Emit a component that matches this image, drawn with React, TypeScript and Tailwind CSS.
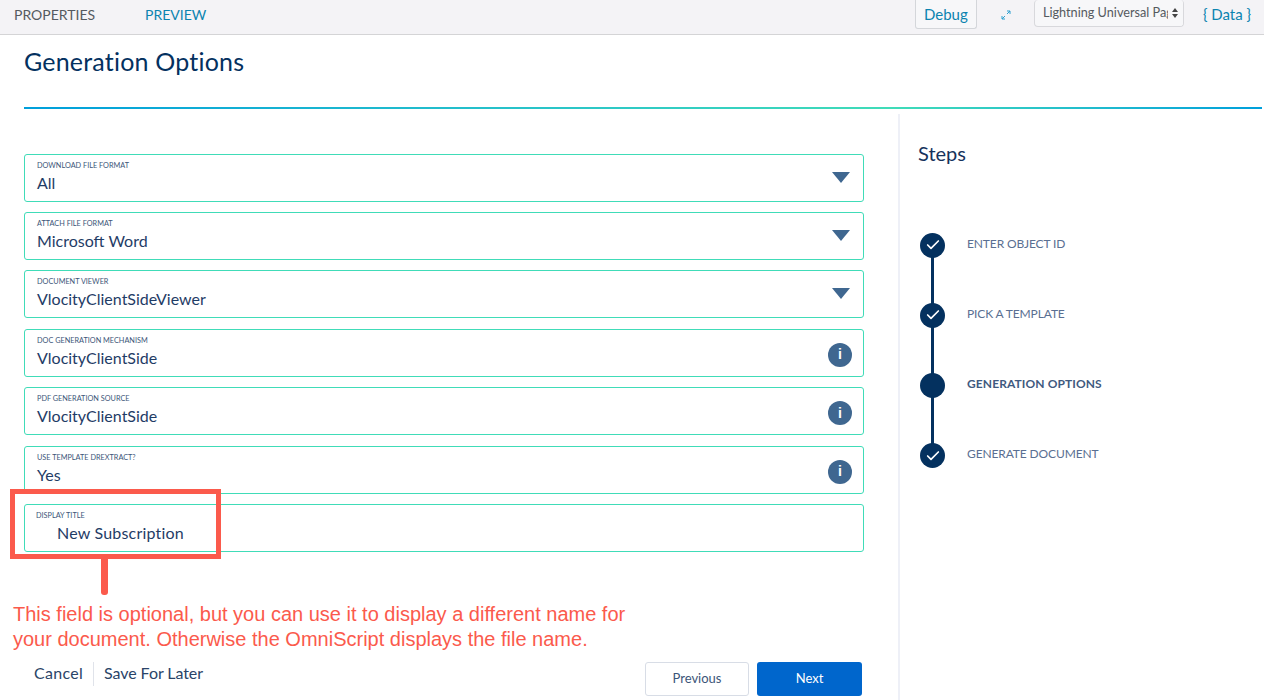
import { Check } from 'lucide-react'

const sans = "font-['Lato','Noto_Sans',sans-serif]"

function CaretField({ label, value }: { label: string; value: string }) {
  return (
    <div className="relative h-[48px] rounded-[3px] border border-[#40dcb8] bg-white pl-[12px]">
      <div className="pt-[5px] text-[7.3px] leading-[11px] uppercase text-[#3c5578]">{label}</div>
      <div className="text-[16px] leading-[24px] text-[#1f3c66]">{value}</div>
      <div className="absolute right-[13px] top-[17px] h-0 w-0 border-x-[9px] border-t-[11px] border-x-transparent border-t-[#3f6790]" />
    </div>
  )
}

function InfoField({ label, value }: { label: string; value: string }) {
  return (
    <div className="relative h-[48px] rounded-[3px] border border-[#40dcb8] bg-white pl-[12px]">
      <div className="pt-[5px] text-[7.3px] leading-[11px] uppercase text-[#3c5578]">{label}</div>
      <div className="text-[16px] leading-[24px] text-[#1f3c66]">{value}</div>
      <div className="absolute right-[11px] top-[13px] flex h-[24px] w-[24px] items-center justify-center rounded-full bg-[#3f6790] font-['Liberation_Sans',sans-serif] text-[14px] font-bold text-white">
        i
      </div>
    </div>
  )
}

function Step({ label, active }: { label: string; active?: boolean }) {
  return (
    <div className="relative flex h-[25px] items-center">
      <div className="flex h-[25px] w-[25px] shrink-0 items-center justify-center rounded-full bg-[#04315f]">
        {!active && <Check className="h-[16px] w-[16px] text-white" strokeWidth={2.5} />}
      </div>
      <div className={`ml-[22px] pb-[3px] text-[12px] uppercase ${active ? 'font-bold tracking-[0.1px] text-[#3f5a80]' : 'tracking-[-0.12px] text-[#5a6f92]'}`}>
        {label}
      </div>
    </div>
  )
}

export default function App() {
  return (
    <div className={`${sans} h-[700px] w-[1264px] overflow-hidden bg-white`}>
      <header className="flex h-[35px] items-start border-b border-[#d4d4d6] bg-[#f4f3f6] pl-[14px] text-[14px]">
        <span className="pt-[4px] text-[#555a60]">PROPERTIES</span>
        <span className="ml-[50px] pt-[4px] text-[#0b84b0]">PREVIEW</span>
        <button className="ml-auto h-[29px] w-[62px] rounded-b-[3px] border border-t-0 border-[#d4d6da] bg-[#f7f7f9] text-[15px] text-[#0b84b0]">Debug</button>
        <svg className="ml-[24px] mt-[10px] h-[10px] w-[10px] text-[#2f9fcf]" viewBox="0 0 10 10" fill="none" stroke="currentColor" strokeWidth="1">
          <path d="M1 9 4 6M6 4l3-3M6 1h3v3M1 6v3h3" />
        </svg>
        <div className="relative ml-[23px] flex h-[27px] w-[150px] items-center overflow-hidden rounded-[4px] border border-t-0 border-[#d8d8dc] bg-[#f7f7f9] pl-[8px] text-[12.7px] whitespace-nowrap text-[#555a60]">
          Lightning Universal Page
          <span className="absolute right-0 top-0 flex h-full w-[15px] flex-col items-center justify-center gap-[2px] bg-[#f7f7f9]">
            <span className="h-0 w-0 border-x-[3px] border-b-[4px] border-x-transparent border-b-[#444]" />
            <span className="h-0 w-0 border-x-[3px] border-t-[4px] border-x-transparent border-t-[#444]" />
          </span>
        </div>
        <span className="ml-[19px] mr-[13px] pt-[3px] text-[15px] text-[#0b84b0]">{'{ Data }'}</span>
      </header>

      <div className="pl-[24px]">
        <h1 className="pt-[10px] pb-[1px] text-[25px] leading-[32px] tracking-[0.2px] text-[#04315f]">Generation Options</h1>
      </div>
      <div className="ml-[24px] mr-[2px] mt-[29px] h-[2px] bg-gradient-to-r from-[#009fdb] via-[#40dcb8] via-70% to-[#009fdb]" />

      <div className="flex">
        <main className="w-[898px] shrink-0">
          <div className="flex flex-col gap-[10.4px] pl-[24px] pr-[34px] pt-[44.6px]">
            <CaretField label="Download File Format" value="All" />
            <CaretField label="Attach File Format" value="Microsoft Word" />
            <CaretField label="Document Viewer" value="VlocityClientSideViewer" />
            <InfoField label="Doc Generation Mechanism" value="VlocityClientSide" />
            <InfoField label="PDF Generation Source" value="VlocityClientSide" />
            <InfoField label="Use Template DRExtract?" value="Yes" />
            <div className="relative h-[48px] rounded-[3px] border border-[#40dcb8] bg-white pl-[11px]">
              <div className="pt-[5px] text-[7.3px] leading-[11px] uppercase text-[#3c5578]">Display Title</div>
              <div className="pl-[21px] text-[16px] leading-[24px] tracking-[0.2px] text-[#1f3c66]">New Subscription</div>
              <div className="absolute left-[-15px] top-[-16px] h-[70px] w-[211px] border-[5px] border-[#fb5a4c]" />
              <div className="absolute left-[76px] top-[53px] h-[37px] w-[7px] rounded-b-[3px] bg-[#fb5a4c]" />
            </div>
          </div>

          <p className="pl-[13px] pt-[50px] font-['Liberation_Sans',sans-serif] text-[20px] leading-[25px] text-[#fb5a4c]">
            This field is optional, but you can use it to display a different name for
            <br />
            your document. Otherwise the OmniScript displays the file name.
          </p>

          <div className="flex items-start pl-[34px] pr-[36px] pt-[10px]">
            <div className="flex h-[24px] items-center text-[16px] text-[#2a4468]">
              <span className="pb-[2px] tracking-[0.3px]">Cancel</span>
              <span className="mx-[10px] h-[24px] w-px bg-[#e0e3ea]" />
              <span className="pb-[2px] tracking-[-0.08px]">Save For Later</span>
            </div>
            <div className="ml-auto flex gap-[8px]">
              <button className="h-[34px] w-[104px] rounded-[3px] border border-[#d8dde6] bg-white text-[13px] text-[#3c5578]">Previous</button>
              <button className="h-[34px] w-[105px] rounded-[3px] bg-[#0066cc] text-[13px] text-white">Next</button>
            </div>
          </div>
        </main>

        <aside className="mt-[5px] h-[600px] border-l-2 border-[#eef0f7] pl-[18px] pt-[25px]">
          <h2 className="text-[20px] leading-[28px] text-[#16325c]">Steps</h2>
          <div className="relative ml-[2px] mt-[65.5px] flex flex-col gap-[45.3px]">
            <div className="absolute left-[11px] top-[10px] h-[205px] w-[3px] bg-[#04315f]" />
            <Step label="Enter Object ID" />
            <Step label="Pick a Template" />
            <Step label="Generation Options" active />
            <Step label="Generate Document" />
          </div>
        </aside>
      </div>
    </div>
  )
}
